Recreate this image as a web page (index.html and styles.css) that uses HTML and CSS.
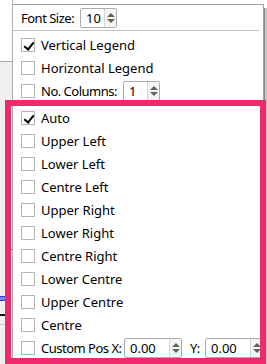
FILE: index.html
```html
<!DOCTYPE html>
<html lang="en">
<head>
  <meta charset="UTF-8">
  <title>Legend Options</title>
  <link rel="stylesheet" href="styles.css">
</head>
<body>
  <div class="screen">
    <div class="backdrop">
      <div class="bd-top"></div>
      <div class="bd-marks">
        <span class="mark-dash"></span>
        <span class="mark-blue"></span>
        <span class="mark-black"></span>
        <span class="mark-grey"></span>
      </div>
    </div>

    <div class="panel">
      <div class="head-row">
        <span class="label">Font Size:</span>
        <div class="spin spin-font">
          <span class="spin-value">10</span>
          <span class="spin-arrows"><i class="up"></i><i class="down"></i></span>
        </div>
      </div>
      <hr class="sep">

      <div class="row"><span class="box checked"></span><span>Vertical Legend</span></div>
      <div class="row"><span class="box"></span><span>Horizontal Legend</span></div>
      <div class="row">
        <span class="box"></span><span class="label label-cols">No. Columns:</span>
        <div class="spin spin-cols">
          <span class="spin-value">1</span>
          <span class="spin-arrows"><i class="up"></i><i class="down"></i></span>
        </div>
      </div>

      <div class="positions">
        <div class="row"><span class="box checked"></span><span>Auto</span></div>
        <div class="row"><span class="box"></span><span>Upper Left</span></div>
        <div class="row"><span class="box"></span><span>Lower Left</span></div>
        <div class="row"><span class="box"></span><span>Centre Left</span></div>
        <div class="row"><span class="box"></span><span>Upper Right</span></div>
        <div class="row"><span class="box"></span><span>Lower Right</span></div>
        <div class="row"><span class="box"></span><span>Centre Right</span></div>
        <div class="row"><span class="box"></span><span>Lower Centre</span></div>
        <div class="row"><span class="box"></span><span>Upper Centre</span></div>
        <div class="row"><span class="box"></span><span>Centre</span></div>
        <div class="row">
          <span class="box"></span><span class="label label-pos">Custom Pos X:</span>
          <div class="spin spin-pos">
            <span class="spin-value">0.00</span>
            <span class="spin-arrows"><i class="up"></i><i class="down"></i></span>
          </div>
          <span class="label label-y">Y:</span>
          <div class="spin spin-pos">
            <span class="spin-value">0.00</span>
            <span class="spin-arrows"><i class="up"></i><i class="down"></i></span>
          </div>
        </div>
      </div>
    </div>

    <div class="edge"></div>

    <!-- highlight frame drawn over the position list -->
    <div class="highlight"></div>
  </div>
</body>
</html>
```

FILE: styles.css
```css
* {
  box-sizing: border-box;
  margin: 0;
  padding: 0;
}

body {
  font-family: 'Noto Sans', 'Open Sans', sans-serif;
  font-size: 13px;
  color: #000;
  background-color: #fff;
}

.screen {
  position: relative;
  display: flex;
  width: 267px;
  height: 364px;
  overflow: hidden;
}

/* window behind the popup */
.backdrop {
  width: 13px;
  display: flex;
  flex-direction: column;
  border-right: 1px solid #b0b0b0;
}

.bd-top {
  height: 62px;
  background-color: #fff;
  border-bottom: 1px solid #a8a8a8;
}

.bd-marks {
  flex: 1;
  background-color: #f0f0f0;
  display: flex;
  flex-direction: column;
  padding-top: 187px;
}

.bd-marks span {
  display: block;
  height: 1px;
}

.mark-dash {
  width: 4px;
  margin-left: 8px;
  background-color: #555;
}

.mark-blue {
  width: 6px;
  height: 5px !important;
  margin-top: 46px;
  border-top: 1px solid #3b3bea;
  border-bottom: 1px solid #3b3bea;
  background-color: #8080f0;
}

.mark-black {
  width: 6px;
  height: 2px !important;
  margin-top: 13px;
  background-color: #111;
}

.mark-grey {
  width: 12px;
  margin-top: 8px;
  background-color: #c8c8c8;
}

/* popup */
.panel {
  width: 251px;
  margin-top: 4px;
  background-color: #fff;
  border: 1px solid #a0a0a0;
  border-bottom: none;
  border-left: none;
  padding-left: 8px;
}

.edge {
  flex: 1;
  margin-top: 8px;
  background-color: #c6c6c6;
  border-left: 1px solid #8c8c8c;
}

.head-row {
  display: flex;
  align-items: center;
  height: 25px;
}

/* labels in front of spin boxes are set a little tighter */
.label {
  flex: none;
  width: 59px;
  letter-spacing: -0.5px;
}

.sep {
  border: none;
  border-top: 1px solid #c4c4c4;
  margin: 0 4px 2px -8px;
}

.row {
  display: flex;
  align-items: center;
  height: 23px;
  white-space: nowrap;
}

.box {
  flex: none;
  width: 14px;
  height: 14px;
  margin-right: 6px;
  border: 1px solid #b4b4b4;
  background-color: #fff;
  position: relative;
}

.box.checked::after {
  content: "";
  position: absolute;
  left: 4px;
  top: 1px;
  width: 4px;
  height: 8px;
  border-right: 2px solid #000;
  border-bottom: 2px solid #000;
  transform: rotate(38deg);
}

.positions {
  margin-top: 4px;
}

.label-cols {
  width: 82px;
}

.label-pos {
  width: 83px;
}

.label-y {
  width: 23px;
  padding-left: 8px;
}

/* spin boxes */
.spin {
  flex: none;
  display: flex;
  height: 20px;
  border: 1px solid #acacac;
  border-radius: 2px;
  background-color: #fff;
}

.spin-value {
  flex: 1;
  padding-left: 5px;
  line-height: 18px;
}

.spin-arrows {
  width: 12px;
  display: flex;
  flex-direction: column;
  justify-content: center;
  align-items: center;
  gap: 2px;
  border-left: 1px solid #d4d4d4;
  background-color: #f4f4f4;
}

.spin-arrows i {
  width: 0;
  height: 0;
  border-left: 4px solid transparent;
  border-right: 4px solid transparent;
}

.spin-arrows .up {
  border-bottom: 4px solid #606060;
}

.spin-arrows .down {
  border-top: 4px solid #606060;
}

.spin-font {
  width: 37px;
}

.spin-cols {
  width: 37px;
}

.spin-pos {
  width: 58px;
}

.highlight {
  position: absolute;
  left: 5px;
  top: 100px;
  width: 261px;
  height: 264px;
  border: 6px solid #ef2a6c;
  pointer-events: none;
}
```
